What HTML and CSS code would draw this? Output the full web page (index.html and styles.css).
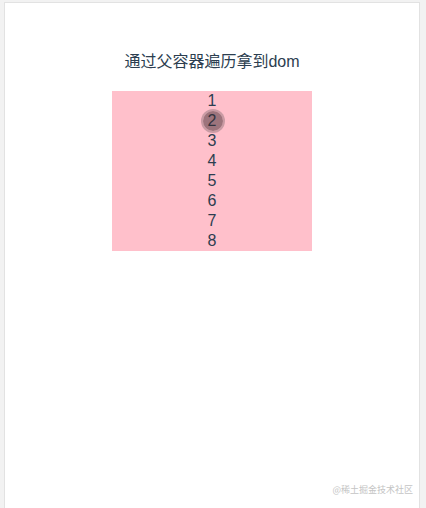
FILE: index.html
```html
<!DOCTYPE html>
<html lang="zh">
<head>
<meta charset="utf-8">
<title>通过父容器遍历拿到dom</title>
<link rel="stylesheet" href="styles.css">
</head>
<body>
<div class="frame">
  <div class="app">
    <div class="title">通过父容器遍历拿到dom</div>
    <div class="list">
      <div class="item">1</div>
      <div class="item active">2<span class="ball"></span></div>
      <div class="item">3</div>
      <div class="item">4</div>
      <div class="item">5</div>
      <div class="item">6</div>
      <div class="item">7</div>
      <div class="item">8</div>
    </div>
  </div>
  <div class="watermark">@稀土掘金技术社区</div>
</div>
</body>
</html>
```
FILE: styles.css
```css
html, body {
  margin: 0;
  padding: 0;
  height: 100%;
}
body {
  background: #f2f2f2;
  font-family: "Liberation Sans", Arial, "Noto Sans CJK SC", sans-serif;
  color: #2c3e50;
}
.frame {
  position: relative;
  box-sizing: border-box;
  margin: 2px 6px 0 4px;
  height: calc(100% - 2px);
  background: #fff;
  border: 1px solid #e2e2e2;
  border-bottom: none;
}
.app {
  display: flex;
  flex-direction: column;
  align-items: center;
  text-align: center;
}
.title {
  margin-top: 48px;
  font-size: 16px;
  line-height: 22px;
}
.list {
  margin-top: 18px;
  width: 200px;
  height: 160px;
  background: #ffc0cb;
}
.item {
  position: relative;
  font-size: 16px;
  line-height: 20px;
  height: 20px;
}
.ball {
  position: absolute;
  left: 89px;
  top: -2px;
  width: 24px;
  height: 24px;
  box-sizing: border-box;
  border-radius: 50%;
  background: rgba(60, 40, 45, 0.5);
  border: 2px solid rgba(120, 100, 105, 0.4);
  background-clip: padding-box;
}
.watermark {
  position: absolute;
  right: 6px;
  bottom: 12px;
  font-size: 9px;
  line-height: 12px;
  color: #c4c4c4;
  font-family: "Noto Sans CJK SC", sans-serif;
}
```
